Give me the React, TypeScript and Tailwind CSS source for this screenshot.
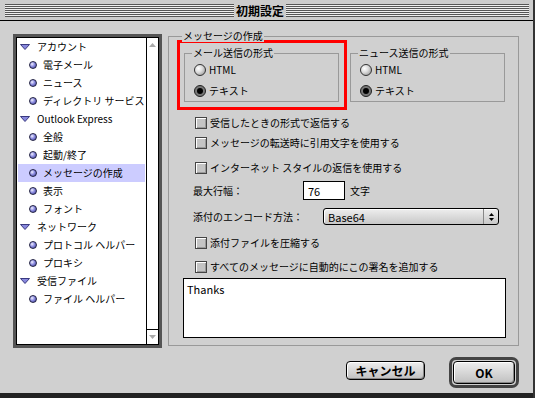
import React from "react";

const items: { t: "cat" | "item"; label: string; sel?: boolean }[] = [
  { t: "cat", label: "アカウント" },
  { t: "item", label: "電子メール" },
  { t: "item", label: "ニュース" },
  { t: "item", label: "ディレクトリ サービス" },
  { t: "cat", label: "Outlook Express" },
  { t: "item", label: "全般" },
  { t: "item", label: "起動/終了" },
  { t: "item", label: "メッセージの作成", sel: true },
  { t: "item", label: "表示" },
  { t: "item", label: "フォント" },
  { t: "cat", label: "ネットワーク" },
  { t: "item", label: "プロトコル ヘルパー" },
  { t: "item", label: "プロキシ" },
  { t: "cat", label: "受信ファイル" },
  { t: "item", label: "ファイル ヘルパー" },
];

const Tri = () => (
  <svg width="10" height="6" viewBox="0 0 10 6" className="shrink-0">
    <polygon points="0.5,0.5 9.5,0.5 5,5.5" fill="#8888dd" stroke="#3a3a80" strokeWidth="1" />
  </svg>
);

const Bullet = () => (
  <span className="block w-[8px] h-[8px] rounded-full border border-[#222244] bg-[radial-gradient(circle_at_35%_35%,#f0f0ff_0,#8c8ce0_45%,#3a3a90_100%)] shrink-0" />
);

const Radio = ({ on }: { on?: boolean }) =>
  on ? (
    <span className="flex items-center justify-center w-[12px] h-[12px] rounded-full border border-[#222] bg-[#777] shrink-0">
      <span className="block w-[6px] h-[6px] rounded-full bg-black" />
    </span>
  ) : (
    <span className="block w-[12px] h-[12px] rounded-full border border-[#333] bg-[radial-gradient(circle_at_35%_35%,#ffffff_0,#dddddd_40%,#888888_100%)] shrink-0" />
  );

const Check = ({ label }: { label: string }) => (
  <div className="flex items-center h-[18px] pl-[26px]">
    <span className="block w-[12px] h-[12px] border border-[#444] bg-[#c4c4c4] shadow-[inset_1px_1px_0_#ffffff,inset_-1px_-1px_0_#999999] shrink-0" />
    <span className="ml-[3px] whitespace-nowrap">{label}</span>
  </div>
);

const SmallGroup = ({ title }: { title: string }) => (
  <div className="relative w-[155px] h-[49px] border border-[#999] pl-[9px] pt-[9px] flex flex-col">
    <span className="absolute left-[7px] top-[-7px] px-[1px] bg-[#d0d0d0] whitespace-nowrap">{title}</span>
    <div className="flex items-center h-[14px]">
      <Radio />
      <span className="ml-[3px]">HTML</span>
    </div>
    <div className="flex items-center h-[14px] mt-[7px]">
      <Radio on />
      <span className="ml-[3px]">テキスト</span>
    </div>
  </div>
);

const stripes =
  "h-[13px] bg-[repeating-linear-gradient(to_bottom,#555555_0px,#555555_1px,#eeeeee_1px,#eeeeee_2px)]";

export default function App() {
  return (
    <div className="w-[535px] h-[398px] overflow-hidden bg-[#d0d0d0] flex flex-col border-r-2 border-[#333] font-['Noto_Sans_CJK_JP','Noto_Sans',sans-serif] text-[10px] leading-[12px] text-black">
      {/* title bar */}
      <div className="h-[21px] shrink-0 bg-[#cccccc] border-b border-black flex pt-[4px] pl-[5px] pr-[4px]">
        <div className={`w-[229px] ${stripes}`} />
        <div className="w-[52px] h-[13px] flex items-center justify-center text-[12px] font-bold leading-[13px]">初期設定</div>
        <div className={`flex-1 ${stripes}`} />
      </div>

      {/* content */}
      <div className="flex-1 border-b-[5px] border-[#222] flex pl-[13px] pt-[13px]">
        {/* list */}
        <div className="w-[149px] h-[314px] border-[3px] border-[#555] shrink-0">
          <div className="w-full h-full border border-black bg-white flex">
            <div className="flex-1 flex flex-col">
              {items.map((it, i) => (
                <div
                  key={i}
                  className={`h-[18px] flex items-center mx-[1px] whitespace-nowrap ${it.sel ? "bg-[#ccccff]" : ""} ${
                    it.t === "cat" ? "pl-[2px]" : "pl-[11px]"
                  }`}
                >
                  {it.t === "cat" ? <Tri /> : <Bullet />}
                  <span className={it.t === "cat" ? "ml-[7px]" : "ml-[6px]"}>{it.label}</span>
                </div>
              ))}
            </div>
            <div className="w-[15px] border-l border-black flex flex-col justify-between">
              <div className="h-[14px] flex items-center justify-center">
                <svg width="7" height="4" viewBox="0 0 7 4">
                  <polygon points="3.5,0 7,4 0,4" fill="#aaaaaa" />
                </svg>
              </div>
              <div className="h-[15px] border-t border-black flex items-center justify-center">
                <svg width="7" height="4" viewBox="0 0 7 4">
                  <polygon points="0,0 7,0 3.5,4" fill="#aaaaaa" />
                </svg>
              </div>
            </div>
          </div>
        </div>

        {/* right column */}
        <div className="ml-[6px] mt-[2px] w-[351px] flex flex-col">
          <div className="relative w-[351px] h-[310px] border border-[#999] flex flex-col">
            <span className="absolute left-[13px] top-[-7px] px-[1px] bg-[#d0d0d0] whitespace-nowrap">メッセージの作成</span>

            <div className="flex pl-[8px] pt-[3px]">
              <div className="w-[170px] h-[70px] border-[3px] border-[#ff0000] pl-[4px] pt-[10px]">
                <SmallGroup title="メール送信の形式" />
              </div>
              <div className="ml-[3px] mt-[13px]">
                <SmallGroup title="ニュース送信の形式" />
              </div>
            </div>

            <div className="mt-[4px]">
              <Check label="受信したときの形式で返信する" />
            </div>
            <div className="mt-[2px]">
              <Check label="メッセージの転送時に引用文字を使用する" />
            </div>
            <div className="mt-[7px]">
              <Check label="インターネット スタイルの返信を使用する" />
            </div>

            <div className="mt-[4px] h-[19px] flex items-center pl-[24px]">
              <span className="w-[110px] whitespace-nowrap">最大行幅：</span>
              <div className="w-[42px] h-[19px] border border-black bg-white pl-[4px] flex items-center text-[11px]">76</div>
              <span className="ml-[5px]">文字</span>
            </div>

            <div className="mt-[8px] h-[17px] flex items-center pl-[24px]">
              <span className="w-[130px] whitespace-nowrap">添付のエンコード方法：</span>
              <div className="w-[176px] h-[17px] rounded-[3px] border border-black bg-[linear-gradient(to_bottom,#eeeeee,#c8c8c8)] shadow-[inset_1px_1px_0_#ffffff] flex items-center">
                <span className="flex-1 pl-[4px] text-[11px]">Base64</span>
                <div className="w-[15px] h-full border-l border-[#888] flex flex-col items-center justify-center gap-[2px]">
                  <svg width="5" height="3" viewBox="0 0 5 3">
                    <polygon points="2.5,0 5,3 0,3" fill="#000" />
                  </svg>
                  <svg width="5" height="3" viewBox="0 0 5 3">
                    <polygon points="0,0 5,0 2.5,3" fill="#000" />
                  </svg>
                </div>
              </div>
            </div>

            <div className="mt-[9px]">
              <Check label="添付ファイルを圧縮する" />
            </div>
            <div className="mt-[6px]">
              <Check label="すべてのメッセージに自動的にこの署名を追加する" />
            </div>

            <div className="mt-[2px] ml-[14px] w-[323px] h-[60px] border border-black bg-white px-[3px] pt-[4px] text-[11px] leading-[13px]">
              Thanks
            </div>
          </div>

          {/* buttons */}
          <div className="mt-[11px] flex justify-end items-start">
            <div className="mt-[4px] w-[79px] h-[19px] rounded-[4px] border border-black bg-[linear-gradient(to_bottom,#eeeeee,#c0c0c0)] shadow-[inset_1px_1px_0_#ffffff,inset_-1px_-1px_0_#888888] flex items-center justify-center text-[12px] font-bold">
              キャンセル
            </div>
            <div className="ml-[24px] w-[70px] h-[31px] rounded-[7px] border-[3px] border-[#444] p-[1px]">
              <div className="w-full h-full rounded-[4px] border border-black bg-[linear-gradient(to_bottom,#eeeeee,#c0c0c0)] shadow-[inset_1px_1px_0_#ffffff,inset_-1px_-1px_0_#888888] flex items-center justify-center text-[12px] font-bold">
                OK
              </div>
            </div>
          </div>
        </div>
      </div>
    </div>
  );
}
